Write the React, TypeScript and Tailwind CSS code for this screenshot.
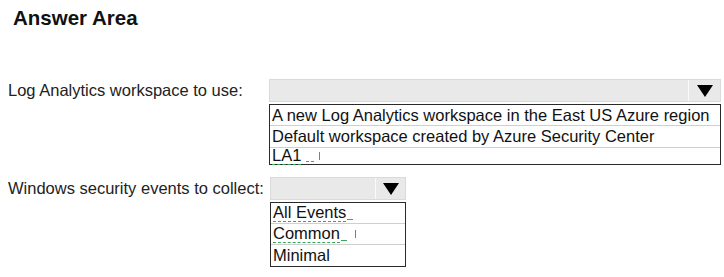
const Arrow = () => (
  <svg width="16" height="12" viewBox="0 0 16 12">
    <path d="M0 0 L16 0 L8 12 Z" fill="#000" />
  </svg>
);

type SelectProps = {
  width: string;
  options: React.ReactNode[];
  rowHeights: string[];
  cellWidth: string;
};

const Select = ({ width, options, rowHeights, cellWidth }: SelectProps) => (
  <div className={`flex flex-col ${width}`}>
    <div className="flex h-[23px] bg-[#e9e9e9] border border-[#dadada]">
      <div className="flex-1" />
      <div className={`${cellWidth} flex items-center justify-center border-l border-[#fafafa]`}>
        <Arrow />
      </div>
    </div>
    <div className="mt-[2px] border border-[#2a2a2a] bg-white">
      {options.map((opt, i) => (
        <div
          key={i}
          className={`${rowHeights[i]} flex items-center pl-[2px] text-[16.5px] leading-none text-[#111] ${
            i > 0 ? "border-t border-[#cfcfcf]" : ""
          }`}
        >
          {opt}
        </div>
      ))}
    </div>
  </div>
);

const Squiggle = ({ children }: { children: React.ReactNode }) => (
  <span className="border-b border-dashed border-[#3aa85a]">{children}</span>
);

export default function App() {
  return (
    <div className="w-[724px] h-[277px] bg-white font-['Liberation_Sans',Arial,sans-serif] text-[#222]">
      <h1 className="pl-[13px] pt-[6px] text-[20.5px] font-bold leading-[24px] text-[#111]">Answer Area</h1>

      <div className="flex mt-[49px]">
        <div className="w-[269px] pl-[8px] h-[23px] flex items-center text-[16.5px]">Log Analytics workspace to use:</div>
        <Select
          width="w-[452px]"
          cellWidth="w-[32px]"
          rowHeights={["h-[20px]", "h-[22px]", "h-[17px]"]}
          options={[
            "A new Log Analytics workspace in the East US Azure region",
            "Default workspace created by Azure Security Center",
            <span className="flex items-center">
              <Squiggle>LA1</Squiggle>
              <span className="ml-[5px] w-[8px] border-b border-dashed border-[#3aa85a] self-end mb-[3px]" />
              <span className="ml-[5px] h-[8px] border-l border-[#3aa85a]" />
            </span>,
          ]}
        />
      </div>

      <div className="flex mt-[12px]">
        <div className="w-[270px] pl-[8px] h-[23px] flex items-center text-[16.5px]">Windows security events to collect:</div>
        <Select
          width="w-[136px]"
          cellWidth="w-[30px]"
          rowHeights={["h-[20px]", "h-[21px]", "h-[22px]"]}
          options={[
            <span className="flex items-center">
              <Squiggle>All Events</Squiggle>
              <span className="ml-[1px] w-[6px] border-b border-[#3aa85a] self-end mb-[2px]" />
            </span>,
            <span className="flex items-center">
              <Squiggle>Common</Squiggle>
              <span className="ml-[1px] w-[6px] border-b border-[#3aa85a] self-end mb-[2px]" />
              <span className="ml-[8px] h-[8px] border-l border-[#3aa85a]" />
            </span>,
            "Minimal",
          ]}
        />
      </div>
    </div>
  );
}
